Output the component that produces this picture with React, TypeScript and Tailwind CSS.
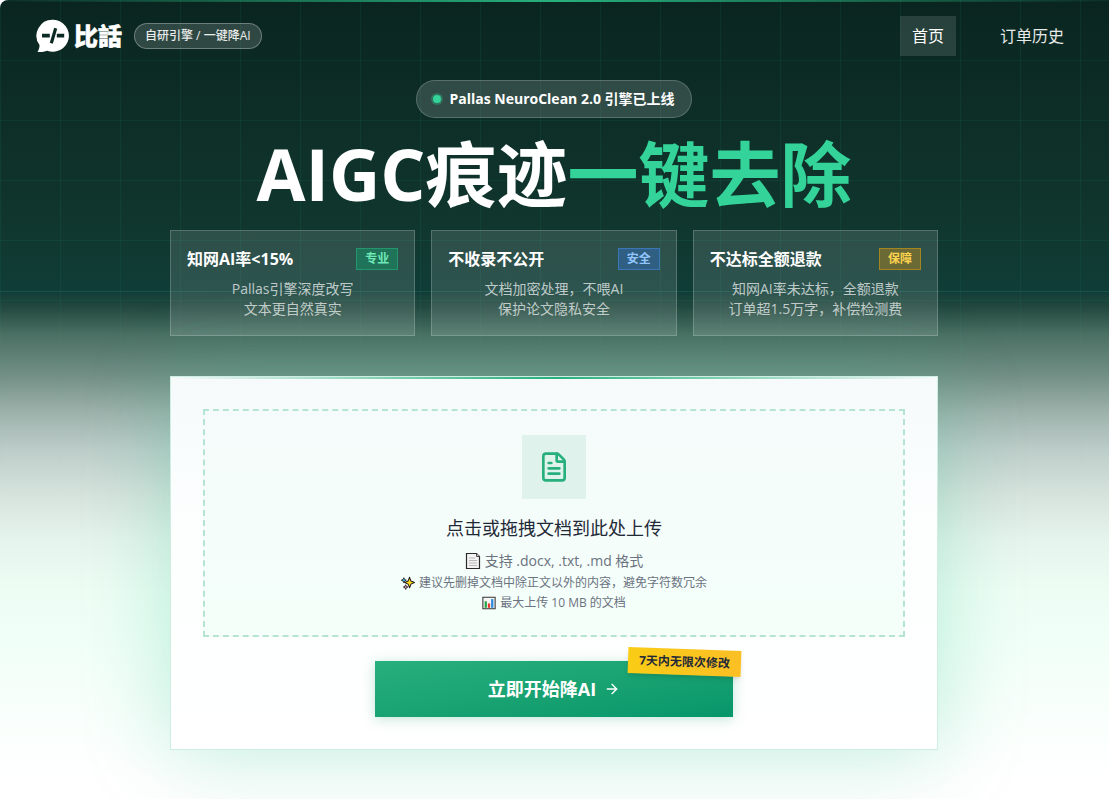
import React from "react";
import { ArrowRight, FileText } from "lucide-react";

const features = [
  {
    title: "知网AI率<15%",
    tag: "专业",
    tagClass: "border-[#23966d] bg-[#1f7358] text-[#6ee7b7]",
    lines: ["Pallas引擎深度改写", "文本更自然真实"],
  },
  {
    title: "不收录不公开",
    tag: "安全",
    tagClass: "border-[#3b76b8] bg-[#2f5f82] text-[#93c5fd]",
    lines: ["文档加密处理，不喂AI", "保护论文隐私安全"],
  },
  {
    title: "不达标全额退款",
    tag: "保障",
    tagClass: "border-[#a58422] bg-[#6b6a35] text-[#fcd34d]",
    lines: ["知网AI率未达标，全额退款", "订单超1.5万字，补偿检测费"],
  },
];

function Logo() {
  return (
    <svg viewBox="0 0 34 34" className="size-[34px]" aria-hidden="true">
      <path
        fill="#fff"
        d="M17.500 .8a16 16 0 1 1-6.400 30.900c-3 1.200-6.300 1.500-9.600 1.200 1.300-2 2.100-4.300 2-6.800A16 16 0 0 1 17.500 .8Z"
      />
      <path d="M6 16.700h7.800M20.800 16.700h7.400" stroke="#0c2a24" strokeWidth="3.800" />
      <path d="M19.700 9.300 15.300 24.200" stroke="#0c2a24" strokeWidth="3.200" />
    </svg>
  );
}

function PageIcon() {
  return (
    <svg viewBox="0 0 16 18" className="h-[18px] w-4" aria-hidden="true">
      <path d="M1.500 1.500h10l3 3v12h-13z" fill="#f3f3f3" stroke="#2b2b2b" strokeWidth="1.200" />
      <path d="M11.500 1.500v3h3" fill="#d0d0d0" stroke="#2b2b2b" strokeWidth=".8" />
      <path d="M4 6h6M4 8.500h8M4 11h8M4 13.500h8" stroke="#b9b9b9" />
    </svg>
  );
}

function SparklesIcon() {
  return (
    <svg viewBox="0 0 16 16" className="size-3.5" aria-hidden="true" stroke="#1d1d1d" strokeLinejoin="round">
      <path d="m9.800 1.500 1.600 4.300 4 1.700-4 1.800-1.600 4.200-1.700-4.200-3.900-1.800 3.900-1.700z" fill="#ffd51e" strokeWidth="1.200" />
      <path d="m3.200 2 .9 2 1.900.8-1.900.9-.9 2-.8-2-2-.9 2-.8z" fill="#3cc3f2" />
      <path d="m5.300 10 .8 1.800 1.800.8-1.800.8-.8 1.900-.8-1.900-1.800-.8 1.800-.8z" fill="#f49ac1" />
    </svg>
  );
}

function ChartIcon() {
  return (
    <svg viewBox="0 0 16 16" className="size-3.5" aria-hidden="true">
      <path d="M1 1.500h14v13H1z" fill="#f6f6f6" stroke="#333" strokeWidth="1.200" />
      <path d="M3 6h2.600v7.500H3z" fill="#27a84a" />
      <path d="M6.700 8.500h2.600v5H6.700z" fill="#e5382e" />
      <path d="M10.400 3.500H13v10h-2.600z" fill="#2d8ae0" />
    </svg>
  );
}

export default function App() {
  return (
    <div className="relative isolate min-h-screen overflow-hidden rounded-tl-lg bg-[linear-gradient(180deg,#0a2520_0px,#10362e_220px,#103d37_290px,#21473e_306px,#4b7064_335px,#728f85_375px,#a0b4ae_415px,#bdcdc9_450px,#d6e3dd_495px,#e5f4ec_540px,#edfdf4_590px,#f0fff7_640px,#f7fffb_700px,#ffffff_780px)] pr-px font-['Open_Sans','Noto_Sans_CJK_SC',sans-serif]">
      <div
        aria-hidden="true"
        className="absolute inset-x-0 top-0 -z-10 h-[500px] bg-[linear-gradient(to_right,rgba(52,211,153,0.07)_1px,transparent_1px),linear-gradient(to_bottom,rgba(52,211,153,0.07)_1px,transparent_1px)] bg-size-[60px_60px] [mask-image:linear-gradient(to_bottom,black_50%,transparent)]"
      />
      <div aria-hidden="true" className="absolute inset-x-0 top-[291px] -z-10 h-px bg-[#34d399]/15" />
      <div
        aria-hidden="true"
        className="absolute inset-x-0 top-0 h-0.5 bg-linear-to-r from-transparent via-[#27b07d] to-transparent"
      />

      <header className="flex items-center justify-between px-8 pt-4">
        <div className="flex items-center gap-3 pl-1">
          <a href="#" className="flex items-center gap-1 text-white">
            <Logo />
            <span className="text-2xl leading-8 font-black [-webkit-text-stroke:0.5px_white]">比話</span>
          </a>
          <span className="rounded-full border border-white/30 bg-white/15 px-2.5 py-1 text-xs font-medium text-white/90">
            自研引擎 / 一键降AI
          </span>
        </div>
        <nav className="flex gap-8 text-base">
          <a href="#" aria-current="page" className="bg-white/12 px-3 py-2 text-white">
            首页
          </a>
          <a href="#orders" className="px-3 py-2 text-white/90">
            订单历史
          </a>
        </nav>
      </header>

      <main className="mx-auto max-w-3xl pt-6 pb-12">
        <section className="flex flex-col items-center">
          <div className="flex items-center gap-2 rounded-full border border-white/20 bg-white/15 px-4 py-2 text-sm font-bold text-white">
            <span className="size-2 rounded-full bg-[#34d399] ring-2 ring-[#34d399]/30" />
            Pallas NeuroClean 2.0 引擎已上线
          </div>
          <h1 className="mt-4 text-center text-[71px] leading-20 font-bold whitespace-nowrap text-white">
            AIGC痕迹<span className="text-[#34d399]">一键去除</span>
          </h1>
        </section>

        <section className="mt-4 grid grid-cols-3 gap-4">
          {features.map((f) => (
            <article key={f.title} className="border border-white/20 bg-white/12 p-4">
              <div className="flex items-center justify-between">
                <h2 className="text-base font-bold text-white">{f.title}</h2>
                <span className={`border px-2 text-xs leading-5 font-bold ${f.tagClass}`}>{f.tag}</span>
              </div>
              <p className="mt-2 text-center text-sm whitespace-nowrap text-white/70">
                {f.lines[0]}
                <br />
                {f.lines[1]}
              </p>
            </article>
          ))}
        </section>

        <section className="relative mt-10 border border-[#cdeee0] bg-linear-to-b from-[#f6fafb] via-[#fcfffe] via-40% to-white p-8 shadow-[0_4px_80px_rgba(16,185,129,0.25)]">
          <div
            aria-hidden="true"
            className="absolute inset-x-0 top-0 h-0.5 bg-linear-to-r from-transparent via-[#27b07d] to-transparent"
          />
          <label className="flex cursor-pointer flex-col items-center border-2 border-dashed border-[#b5e5d2] bg-linear-to-b from-[#f5fbfa] to-[#f4fffa] px-6 pt-6 pb-[22px] text-center">
            <input type="file" accept=".docx,.txt,.md" className="sr-only" />
            <span className="flex size-16 items-center justify-center bg-[#dff3ec] text-[#27b07d]">
              <FileText size={32} />
            </span>
            <span className="mt-4 text-lg leading-[26px] text-[#1f2937]">点击或拖拽文档到此处上传</span>
            <span className="mt-2 flex items-center gap-1 text-sm leading-6 text-[#6b7280]">
              <PageIcon />
              支持 .docx, .txt, .md 格式
            </span>
            <span className="flex items-center gap-1 text-xs leading-5 text-[#6b7280]">
              <SparklesIcon />
              建议先删掉文档中除正文以外的内容，避免字符数冗余
            </span>
            <span className="flex items-center gap-1 text-xs leading-5 text-[#6b7280]">
              <ChartIcon />
              最大上传 10 MB 的文档
            </span>
          </label>

          <div className="relative mx-auto mt-6 w-[358px] max-w-full">
            <button
              type="button"
              className="flex h-14 w-full cursor-pointer items-center justify-center gap-2 bg-linear-to-br from-[#27b07d] to-[#059669] text-lg font-bold text-white shadow-[0_2px_12px_rgba(16,150,105,0.25)]"
            >
              立即开始降AI
              <ArrowRight size={16} />
            </button>
            <span className="absolute -top-3 -right-2 rotate-2 bg-linear-to-r from-[#facc15] to-[#fbbf24] px-[11px] py-1 text-xs leading-[18px] font-bold text-[#1f2937] shadow-md">
              7天内无限次修改
            </span>
          </div>
        </section>
      </main>
    </div>
  );
}
